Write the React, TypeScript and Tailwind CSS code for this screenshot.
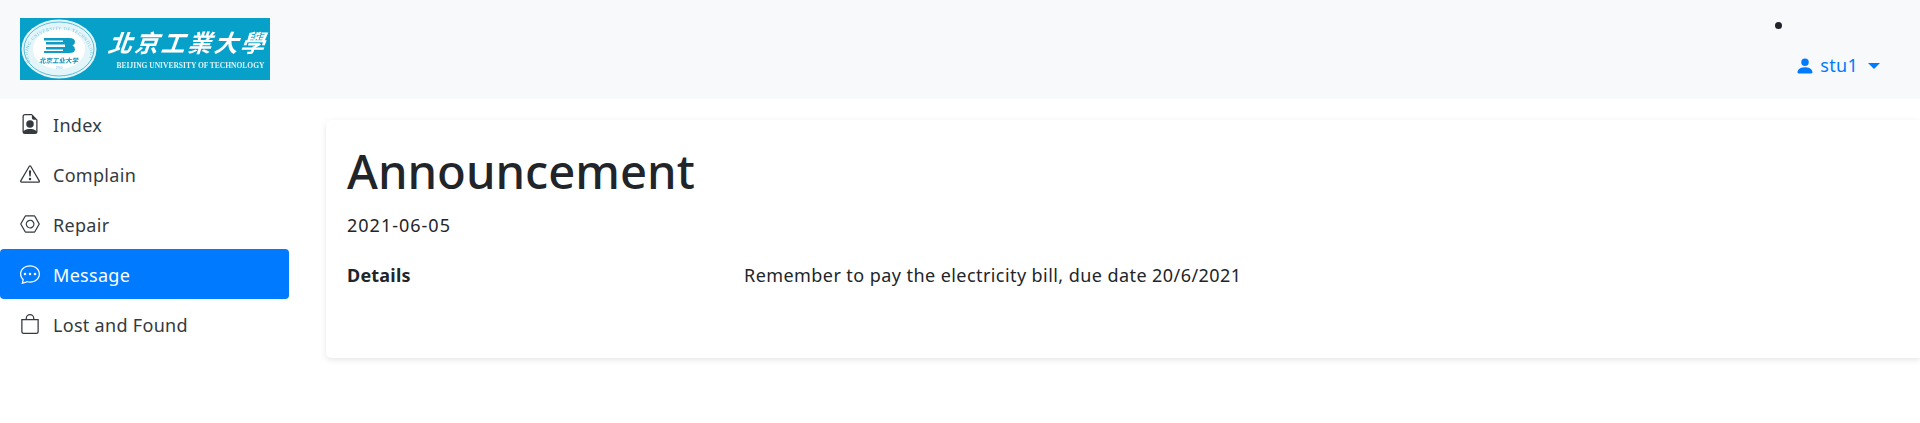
import { BsBag, BsChatDots, BsExclamationTriangle, BsFileEarmarkPerson, BsNut, BsPersonFill } from 'react-icons/bs'

const navItems = [
  { label: 'Index', icon: BsFileEarmarkPerson },
  { label: 'Complain', icon: BsExclamationTriangle },
  { label: 'Repair', icon: BsNut },
  { label: 'Message', icon: BsChatDots, active: true },
  { label: 'Lost and Found', icon: BsBag },
]

function Logo() {
  return (
    <div className="flex h-[62px] w-[250px] items-center bg-[#06a0c9] pl-[1px] text-white">
      {/* Emblem */}
      <svg viewBox="0 0 76 60" className="h-[60px] w-[76px] shrink-0 blur-[0.5px]">
        <ellipse cx="38" cy="30" rx="37.500" ry="29.500" fill="#e4f5fa" />
        <ellipse cx="38" cy="30" rx="35" ry="27" fill="none" stroke="#35b0d2" strokeWidth="0.8" />
        <ellipse cx="38" cy="30" rx="26" ry="20" fill="#fff" />
        <path id="emblem-ring" d="M9 43 A31 24 0 1 1 67 43" fill="none" />
        <text fontSize="4.400" letterSpacing="0.6" fill="#6fc3dc" fontFamily="Liberation Serif, serif">
          <textPath href="#emblem-ring">BEIJING UNIVERSITY OF TECHNOLOGY</textPath>
        </text>
        <path
          d="M23 19H48Q54 19 54 23Q54 25.500 51.500 26.500Q54 27.500 54 30.500Q54 34 48 34H23V32H42V30.500H25V28H44V25.500H25V23H42V21.500H23Z"
          fill="#0f9cc4"
        />
        <text x="38" y="44" textAnchor="middle" fontSize="6.500" fill="#0f8fb5" fontFamily="'Noto Sans CJK SC', sans-serif" fontWeight="700" transform="skewX(-10) translate(7.500 0)">
          北京工业大学
        </text>
        <text x="38" y="50" textAnchor="middle" fontSize="3.500" fill="#7cc8df" fontFamily="Liberation Serif, serif">1960</text>
      </svg>
      <div className="ml-[14px] flex flex-col items-center blur-[0.5px]">
        <span className="-skew-x-[20deg] whitespace-nowrap font-['Noto_Sans_CJK_TC',sans-serif] text-[24px] font-bold leading-[30px] tracking-[2.500px]">
          北京工業大學
        </span>
        <span className="mt-[4px] whitespace-nowrap font-['Liberation_Serif',serif] text-[7.500px] font-bold leading-[10px] text-[#dff3f8]">
          BEIJING UNIVERSITY OF TECHNOLOGY
        </span>
      </div>
    </div>
  )
}

export default function App() {
  return (
    <div className="min-h-[423px] bg-white font-['Noto_Sans',sans-serif] text-[18px] leading-[27px] text-[#212529]">
      {/* Top bar */}
      <header className="flex h-[99px] items-start justify-between bg-[#f8f9fa] pl-[20px] pr-[40px] pt-[18px]">
        <Logo />
        <div className="flex flex-col">
          <span className="mb-[23px] ml-[-20px] mt-[4px] h-[7px] w-[7px] rounded-full bg-[#212529]" />
          <div className="flex items-center text-[#007bff]">
            <BsPersonFill size={20} className="mr-[5px]" />
            <span className="tracking-[0.3px]">stu1</span>
            <span className="ml-[10px] h-0 w-0 border-x-[6px] border-t-[6px] border-x-transparent border-t-[#007bff]" />
          </div>
        </div>
      </header>

      <div className="flex">
        {/* Sidebar */}
        <nav className="w-[289px] shrink-0">
          {navItems.map(({ label, icon: Icon, active }) => (
            <a
              key={label}
              className={`flex h-[50px] items-center rounded-[4px] pl-[20px] ${active ? 'bg-[#007bff] text-white' : 'text-[#343a40]'}`}
            >
              <Icon size={20} className="mr-[13px] shrink-0" />
              <span className="relative top-[1px] tracking-[0.3px]">{label}</span>
            </a>
          ))}
        </nav>

        {/* Announcement card */}
        <main className="ml-[37px] mt-[21px] h-[238px] flex-1 rounded-l-[5px] bg-white px-[21px] pt-[22px] shadow-[0_2px_6px_rgba(0,0,0,0.1)]">
          <h1 className="text-[47.200px] font-medium leading-[58px]">Announcement</h1>
          <p className="mt-[12px] tracking-[1px]">2021-06-05</p>
          <div className="mt-[23px] flex">
            <strong className="w-[397px] shrink-0 font-bold tracking-[0.2px]">Details</strong>
            <span className="tracking-[0.43px]">Remember to pay the electricity bill, due date 20/6/2021</span>
          </div>
        </main>
      </div>
    </div>
  )
}
